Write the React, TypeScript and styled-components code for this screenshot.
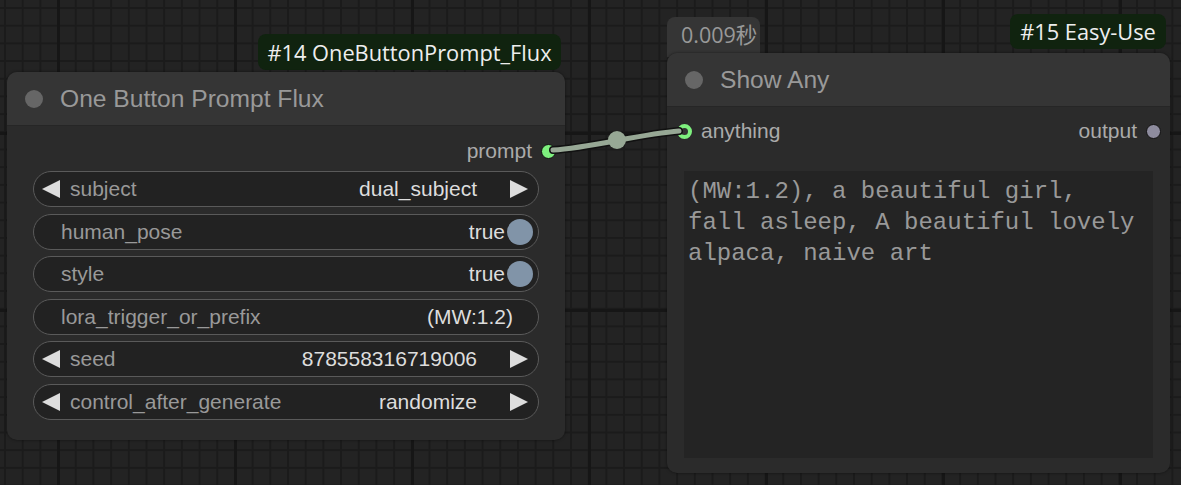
import React from "react";
import styled, { createGlobalStyle } from "styled-components";

const GlobalStyle = createGlobalStyle`
  html, body { margin: 0; padding: 0; background: #222; }
  body { font-family: "Liberation Sans", Arial, sans-serif; overflow: hidden; }
`;

const Canvas = styled.div`
  position: relative;
  width: 1181px;
  height: 485px;
  overflow: hidden;
  background-color: #232323;
  background-image:
    linear-gradient(to right, #161616 0 3px, transparent 3px),
    linear-gradient(to bottom, #161616 0 3px, transparent 3px),
    linear-gradient(to right, #1b1b1b 0 2px, transparent 2px),
    linear-gradient(to bottom, #1b1b1b 0 2px, transparent 2px);
  background-size: 177px 177px, 177px 177px, 17.7px 17.7px, 17.7px 17.7px;
  background-position: 57px 0, 0 132px, 4px 0, 0 7px;
`;

const NodeBox = styled.div<{ $x: number; $y: number; $w: number; $h: number }>`
  position: absolute;
  left: ${(p) => p.$x}px;
  top: ${(p) => p.$y}px;
  width: ${(p) => p.$w}px;
  height: ${(p) => p.$h}px;
  background: #2b2b2b;
  border-radius: 10px;
  box-shadow: 0 0 3px rgba(0, 0, 0, 0.5);
  display: flex;
  flex-direction: column;
`;

const TitleBar = styled.div<{ $h: number }>`
  height: ${(p) => p.$h}px;
  flex: none;
  background: #353535;
  border-radius: 10px 10px 0 0;
  border-bottom: 1px solid #262626;
  box-sizing: border-box;
  display: flex;
  align-items: center;
  padding-left: 18px;
  gap: 17px;
`;

const TitleDot = styled.span`
  width: 18px;
  height: 18px;
  border-radius: 50%;
  background: #666;
  flex: none;
`;

const TitleText = styled.span`
  font-size: 24.6px;
  color: #999;
  white-space: nowrap;
`;

const Badge = styled.div<{ $x: number; $y: number; $w: number; $h: number }>`
  position: absolute;
  left: ${(p) => p.$x}px;
  top: ${(p) => p.$y}px;
  width: ${(p) => p.$w}px;
  height: ${(p) => p.$h}px;
  background: #10230f;
  border-radius: 8px;
  color: #eee;
  font-family: "Open Sans", "Noto Sans", sans-serif;
  font-size: 21.8px;
  display: flex;
  align-items: center;
  justify-content: center;
  white-space: nowrap;
`;

const TimeBadge = styled.div`
  position: absolute;
  left: 667px;
  top: 17px;
  width: 93px;
  height: 40px;
  background: #353535;
  border-radius: 8px 8px 0 0;
  color: #999;
  font-family: "Open Sans", "Noto Sans CJK SC", sans-serif;
  font-size: 21.5px;
  box-sizing: border-box;
  padding: 1px 0 0 14px;
  white-space: nowrap;
`;

const Body = styled.div`
  flex: 1;
  display: flex;
  flex-direction: column;
  padding: 0 26px 0 26px;
`;

const SlotRow = styled.div<{ $top: number; $justify: string }>`
  height: 24px;
  margin-top: ${(p) => p.$top}px;
  display: flex;
  align-items: center;
  justify-content: ${(p) => p.$justify};
  font-size: 21px;
  color: #aaa;
`;

const SlotGroup = styled.div`
  display: flex;
  align-items: center;
  gap: 9px;
`;

const SlotDot = styled.span<{ $color: string; $ring?: boolean }>`
  width: 15px;
  height: 15px;
  box-sizing: border-box;
  border-radius: 50%;
  background: ${(p) => (p.$ring ? "#333" : p.$color)};
  border: ${(p) => (p.$ring ? `4.5px solid ${p.$color}` : "1.5px solid #111")};
  flex: none;
`;

const Widgets = styled.div`
  display: flex;
  flex-direction: column;
  gap: 6.6px;
  margin-top: 8px;
`;

const Widget = styled.div`
  height: 36px;
  box-sizing: border-box;
  border: 1.5px solid #5a5a5a;
  border-radius: 18px;
  background: #222;
  display: flex;
  align-items: center;
  padding: 0 10px 0 8px;
  font-size: 21px;
  white-space: nowrap;
`;

const Arrow = styled.span<{ $dir: "l" | "r" }>`
  width: 0;
  height: 0;
  flex: none;
  border-top: 9px solid transparent;
  border-bottom: 9px solid transparent;
  ${(p) =>
    p.$dir === "l"
      ? "border-right: 18px solid #ddd; margin-right: 10px;"
      : "border-left: 18px solid #ddd; margin-left: 33px;"}
`;

const Label = styled.span<{ $pad?: boolean }>`
  color: #999;
  flex: 1;
  padding-left: ${(p) => (p.$pad ? "19px" : "0")};
`;

const Value = styled.span<{ $padR?: number }>`
  color: #ddd;
  padding-right: ${(p) => p.$padR ?? 0}px;
`;

const Toggle = styled.span`
  width: 26px;
  height: 26px;
  border-radius: 50%;
  background: #8194a8;
  margin-left: 2px;
  margin-right: -5px;
  flex: none;
`;

const TextArea = styled.div`
  margin: 28px 17px 15px 17px;
  flex: 1;
  background: #242424;
  color: #999;
  font-family: "Liberation Mono", "Courier New", monospace;
  font-size: 24px;
  line-height: 31px;
  padding: 5px 0 0 4px;
  white-space: pre-wrap;
`;

const Wire = styled.svg`
  position: absolute;
  left: 0;
  top: 0;
  pointer-events: none;
`;

type W = { kind: "combo" | "toggle" | "text"; label: string; value: string };

const widgets: W[] = [
  { kind: "combo", label: "subject", value: "dual_subject" },
  { kind: "toggle", label: "human_pose", value: "true" },
  { kind: "toggle", label: "style", value: "true" },
  { kind: "text", label: "lora_trigger_or_prefix", value: "(MW:1.2)" },
  { kind: "combo", label: "seed", value: "878558316719006" },
  { kind: "combo", label: "control_after_generate", value: "randomize" },
];

export default function App() {
  return (
    <>
      <GlobalStyle />
      <Canvas>
        <Badge $x={258} $y={34} $w={303} $h={36}>#14 OneButtonPrompt_Flux</Badge>
        <NodeBox $x={7} $y={72} $w={558} $h={368}>
          <TitleBar $h={54}>
            <TitleDot />
            <TitleText>One Button Prompt Flux</TitleText>
          </TitleBar>
          <Body>
            <SlotRow $top={13} $justify="flex-end">
              <SlotGroup style={{ marginRight: -17 }}>
                <span>prompt</span>
                <SlotDot $color="#7ef07e" />
              </SlotGroup>
            </SlotRow>
            <Widgets>
              {widgets.map((w) => (
                <Widget key={w.label}>
                  {w.kind === "combo" && <Arrow $dir="l" />}
                  <Label $pad={w.kind !== "combo"}>{w.label}</Label>
                  <Value $padR={w.kind === "text" ? 15 : 0}>{w.value}</Value>
                  {w.kind === "toggle" && <Toggle />}
                  {w.kind === "combo" && <Arrow $dir="r" />}
                </Widget>
              ))}
            </Widgets>
          </Body>
        </NodeBox>

        <TimeBadge>0.009秒</TimeBadge>
        <Badge $x={1010} $y={14} $w={156} $h={35}>#15 Easy-Use</Badge>
        <NodeBox $x={667} $y={53} $w={503} $h={420}>
          <TitleBar $h={54}>
            <TitleDot />
            <TitleText>Show Any</TitleText>
          </TitleBar>
          <SlotRow $top={12} $justify="space-between" style={{ padding: "0 9px 0 10px" }}>
            <SlotGroup>
              <SlotDot $color="#7ef07e" $ring />
              <span>anything</span>
            </SlotGroup>
            <SlotGroup>
              <span>output</span>
              <SlotDot $color="#8e8c9e" />
            </SlotGroup>
          </SlotRow>
          <TextArea>{"(MW:1.2), a beautiful girl,\nfall asleep, A beautiful lovely\nalpaca, naive art"}</TextArea>
        </NodeBox>

        <Wire width={1181} height={485}>
          <path d="M553 150 C 590 148, 640 134, 679 131" stroke="#111" strokeWidth={8} fill="none" strokeLinecap="round" />
          <path d="M553 150 C 590 148, 640 134, 679 131" stroke="#97a895" strokeWidth={5} fill="none" strokeLinecap="round" />
          <circle cx={617} cy={140} r={9} fill="#97a895" />
        </Wire>
      </Canvas>
    </>
  );
}
